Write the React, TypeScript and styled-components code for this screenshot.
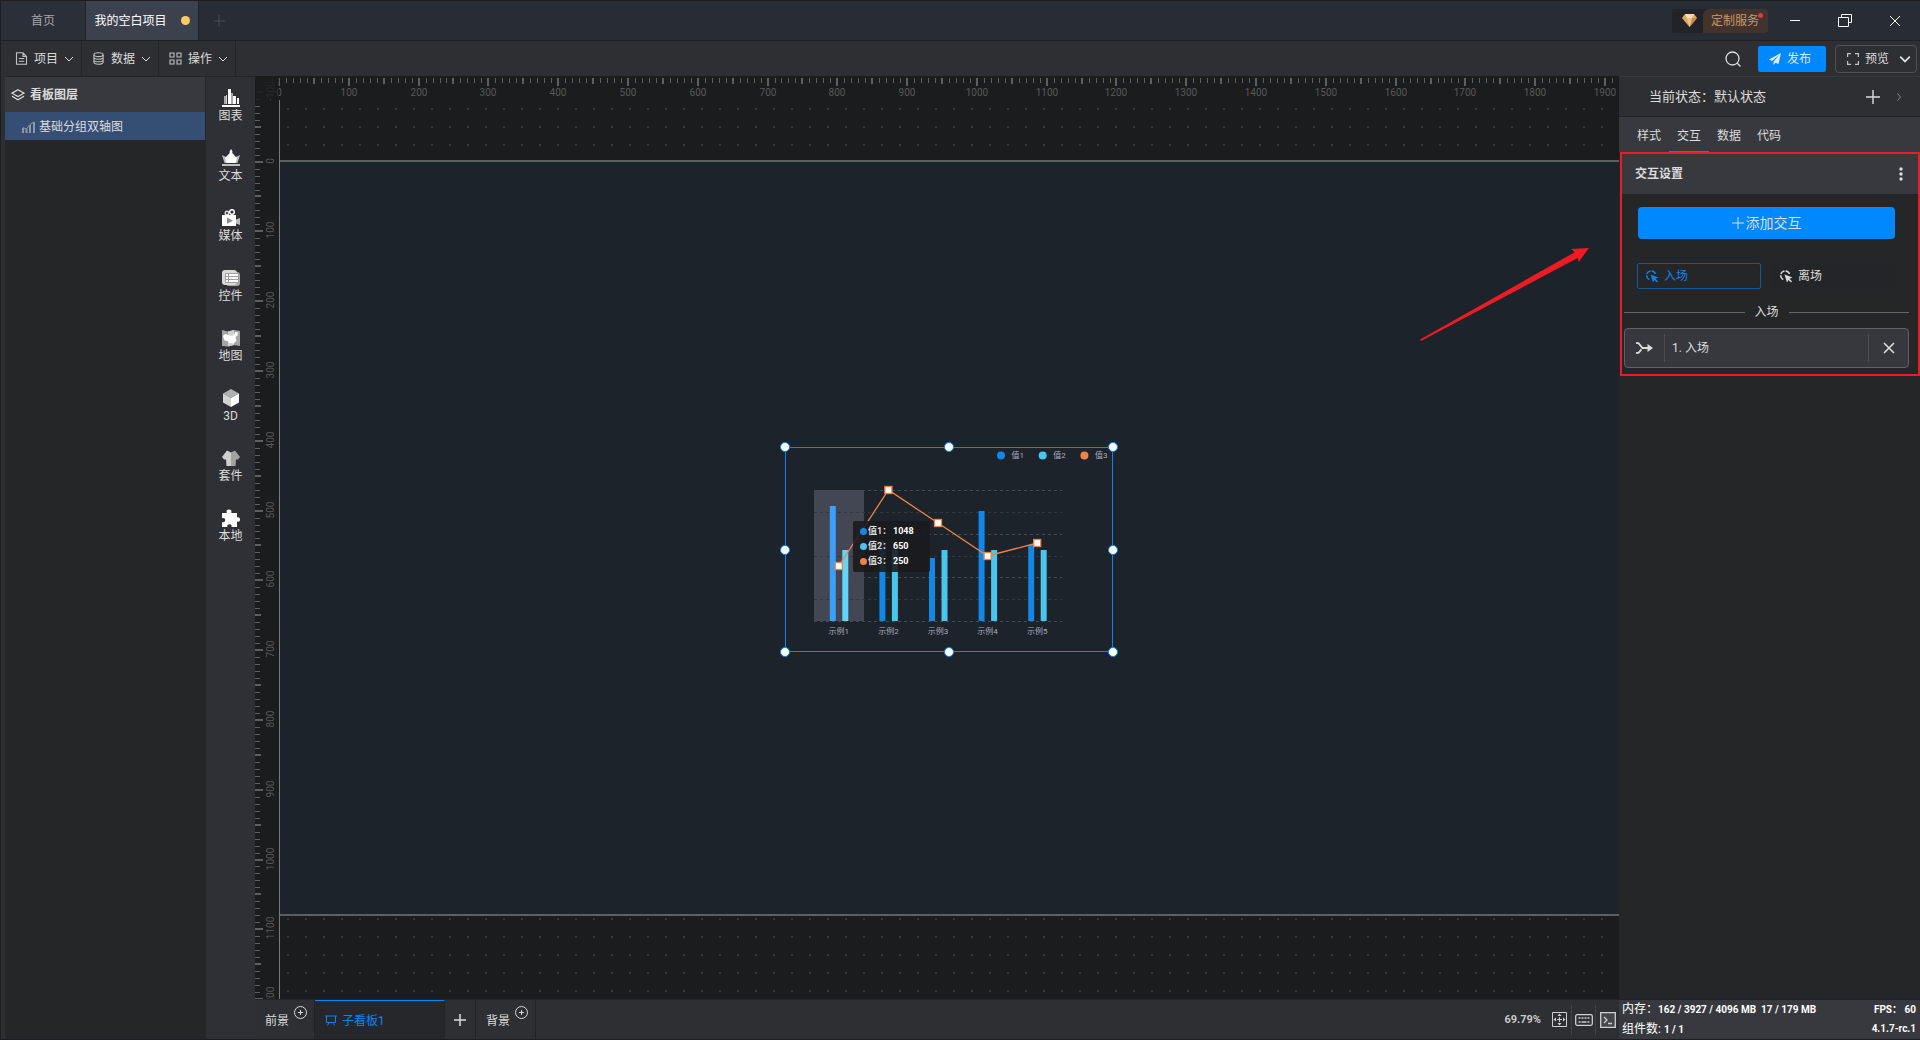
import React, { useLayoutEffect, useRef, useState } from "react";
import styled, { createGlobalStyle, css } from "styled-components";

const GlobalStyle = createGlobalStyle`
  *, *::before, *::after { box-sizing: border-box; }
  body { margin: 0; background: #252627; }
  body, button {
    font-family: Roboto, "Noto Sans CJK SC", sans-serif;
    font-size: 12px;
    line-height: 18px;
    color: #dcdcdc;
  }
  button { margin: 0; padding: 0; border: 0; background: none; cursor: pointer; }
  svg { display: block; flex: none; }
`;

/* ---------- frame ---------- */

const Frame = styled.div`
  display: flex;
  flex-direction: column;
  min-height: 100vh;
  border: solid #1e1d21;
  border-width: 1px 0 1px 1px;
  background: #2d2e32;
`;

const TitleBar = styled.header`
  display: flex;
  height: 40px;
  background: #282c35;
  border-bottom: 1px solid #1f2023;
`;

const ProjectTab = styled.button<{ $active?: boolean }>`
  display: flex;
  align-items: center;
  justify-content: center;
  gap: 14px;
  width: ${(p) => (p.$active ? 113 : 85)}px;
  border-right: 1px solid #212328;
  background: ${(p) => (p.$active ? "#3c414e" : "#2b2f37")};
  color: ${(p) => (p.$active ? "#ffffff" : "#a4a6aa")};
`;

const UnsavedDot = styled.span`
  width: 9px;
  height: 9px;
  border-radius: 50%;
  background: #ffcb66;
`;

const NewTab = styled.button`
  display: flex;
  align-items: center;
  justify-content: center;
  width: 40px;
  color: #484b52;
`;

const Spacer = styled.div`
  flex: 1;
`;

const ServiceBadge = styled.button`
  position: relative;
  display: flex;
  align-self: center;
  height: 24px;
  margin-right: 2px;
  border-radius: 3px;
  background: #222329;
  color: #cb9468;
`;

const BadgeGem = styled.span`
  display: flex;
  align-items: center;
  justify-content: center;
  width: 31px;
  padding-left: 4px;
`;

const BadgeText = styled.span`
  padding: 3px 9px 3px 8px;
  border-radius: 6px 3px 3px 0;
  background: #42342d;
`;

const BadgeDot = styled.i`
  position: absolute;
  top: 4px;
  right: 5px;
  width: 5px;
  height: 5px;
  border-radius: 50%;
  background: #e03a3e;
`;

const WindowButton = styled.button`
  display: flex;
  align-items: center;
  justify-content: center;
  width: 50px;
  color: #ffffff;
`;

/* ---------- menu bar ---------- */

const MenuBar = styled.div`
  display: flex;
  align-items: center;
  height: 35px;
  padding: 0 3px 0 4px;
  background: #2e2f33;
`;

const MenuButton = styled.button`
  display: grid;
  grid-template-columns: 13px 24px 10px;
  gap: 6px;
  align-items: center;
  align-self: stretch;
  width: 77px;
  padding-left: 10px;
  border-right: 1px solid #242528;
  color: #dcdcdc;
`;

const IconButton = styled.button`
  display: flex;
  align-items: center;
  justify-content: center;
  width: 20px;
  height: 20px;
  color: #dcdcdc;
`;

const PublishButton = styled.button`
  display: flex;
  align-items: center;
  justify-content: center;
  gap: 6px;
  width: 68px;
  height: 26px;
  margin: 0 9px 0 15px;
  padding-right: 4px;
  border-radius: 2px;
  background: #0088ff;
  color: #dcecff;
`;

const PreviewButton = styled.button`
  display: flex;
  align-items: center;
  gap: 6px;
  height: 28px;
  padding: 0 5px 0 11px;
  border: 1px solid #505156;
  border-radius: 4px;

  svg:last-child { margin-left: 4px; }
`;

/* ---------- body ---------- */

const Body = styled.div`
  display: flex;
  flex: 1;
  padding-left: 4px;
`;

const LayersPanel = styled.aside`
  width: 200px;
  background: #252627;
`;

const LayersTitle = styled.h2`
  display: flex;
  align-items: center;
  gap: 5px;
  height: 36px;
  margin: 0;
  padding-left: 6px;
  border-top: 1px solid #242528;
  background: #38393e;
  font-size: 12px;
  font-weight: 700;
`;

const LayerRow = styled.button`
  display: flex;
  align-items: center;
  gap: 4px;
  width: 100%;
  height: 28px;
  padding: 2px 0 0 17px;
  background: #354e74;
`;

const ToolRail = styled.nav`
  display: flex;
  flex-direction: column;
  width: 50px;
  border: solid #242528;
  border-width: 1px 0 0 1px;
  background: #2f3035;
`;

const ToolButton = styled.button`
  display: flex;
  flex-direction: column;
  align-items: center;
  height: 60px;
  padding-top: 12px;
`;

const Workspace = styled.main`
  display: flex;
  flex: 1;
  flex-direction: column;
  min-width: 0;
`;

/* ---------- stage ---------- */

const Stage = styled.div`
  position: relative;
  display: grid;
  flex: 1;
  grid-template: 24px 1fr / 24px 1fr;
  overflow: hidden;
  background: #1b1c1d;
`;

const HorizontalRuler = styled.div`
  grid-area: 1 / 1 / 2 / 3;
  overflow: hidden;
`;

const VerticalRuler = styled.div`
  grid-area: 1 / 1 / 3 / 2;
  position: relative;
  overflow: hidden;

  svg { position: absolute; }
`;

const RulerCorner = styled.div`
  grid-area: 1 / 1 / 2 / 2;
  z-index: 1;
  background: linear-gradient(135deg, #1b1c1d 30%, rgba(27, 28, 29, 0.5));
`;

const RulerText = styled.text`
  font-family: Roboto, sans-serif;
  font-size: 10px;
  fill: #58595b;
  text-anchor: middle;
`;

const Canvas = styled.div`
  grid-area: 2 / 2 / 3 / 3;
  position: relative;
  overflow: hidden;
  border-left: 1px solid #77797b;
  background-color: #1b1c1d;
  background-image:
    linear-gradient(#1b1c1d 16px, transparent 0),
    linear-gradient(90deg, #1b1c1d 16px, #37383a 0);
  background-size: 18px 18px;
  background-position: -9px -8px;
`;

const Artboard = styled.div`
  position: absolute;
  top: 60px;
  left: 0;
  width: 100%;
  height: 756px;
  border: solid #5c5e60;
  border-width: 2px 0;
  background: #1c232b;
`;

const Widget = styled.div`
  position: absolute;
  top: 285px;
  left: 505px;
  width: 328px;
  height: 205px;
  padding: 1px;
  box-shadow: inset 0 0 0 1px #0b84f3;
`;

const Handle = styled.i<{ $x: number; $y: number }>`
  position: absolute;
  top: ${(p) => p.$y}%;
  left: ${(p) => p.$x}%;
  width: 10px;
  height: 10px;
  margin: -5px;
  border: 1px solid #0b84f3;
  border-radius: 50%;
  background: #ffffff;
`;

const ChartText = styled.text`
  font-size: 8px;
  fill: #a9abbb;
`;

const Tooltip = styled.dl`
  position: absolute;
  top: 74px;
  left: 68px;
  width: 77px;
  margin: 0;
  padding: 3px 7px;
  border-radius: 2px;
  background: rgba(26, 26, 28, 0.88);
  font-size: 9px;
  font-weight: 700;
  line-height: 15px;
`;

const TooltipRow = styled.div`
  display: grid;
  grid-template-columns: 7px 24px auto;
  gap: 1px;
  align-items: center;
  height: 15px;
  white-space: nowrap;

  dd { margin: 0; color: #ffffff; }
`;

const Swatch = styled.i<{ $color: string }>`
  width: 7px;
  height: 7px;
  border-radius: 50%;
  background: ${(p) => p.$color};
`;

const ArrowMark = styled.svg`
  position: absolute;
  top: 172px;
  right: 30px;
`;

/* ---------- board tabs ---------- */

const BoardBar = styled.footer`
  display: flex;
  height: 40px;
  border-top: 1px solid #242528;
  background: #2e2f33;
`;

const BoardTab = styled.button<{ $active?: boolean }>`
  display: flex;
  align-items: center;
  gap: 5px;
  padding: 1px 7px 0 10px;
  border-right: 1px solid #222327;
  border-top: 1px solid transparent;
  ${(p) =>
    p.$active &&
    css`
      width: 130px;
      border-top-color: #0088ff;
      background: #26272b;
      color: #0b84f3;
    `}
`;

const RaisedIcon = styled.span`
  align-self: flex-start;
  padding-top: 4px;
`;

const AddBoard = styled.button`
  display: flex;
  align-items: center;
  justify-content: center;
  width: 31px;
  border-right: 1px solid #222327;
`;

const ZoomLevel = styled.span`
  align-self: center;
  padding-right: 6px;
  font-family: Roboto, sans-serif;
  font-size: 11px;
  font-weight: 700;
  color: #c8c8c8;
`;

const BoardTool = styled.button`
  display: flex;
  align-items: center;
  justify-content: center;
  align-self: center;
  width: 24px;
  height: 30px;
  color: #cfcfcf;

  & + & { border-left: 1px solid #424348; }
`;

/* ---------- inspector ---------- */

const Inspector = styled.aside`
  display: flex;
  flex-direction: column;
  width: 301px;
  background: #252627;
`;

const StateRow = styled.div`
  display: flex;
  align-items: center;
  gap: 12px;
  height: 41px;
  padding: 0 17px 0 30px;
  border-top: 1px solid #38393c;
  border-bottom: 1px solid #232427;
  background: #2e2f33;
  font-size: 13px;
`;

const InspectorTabs = styled.div`
  display: flex;
  height: 35px;
  padding-left: 10px;
  background: #38393e;
`;

const InspectorTab = styled.button<{ $active?: boolean }>`
  width: 40px;
  padding-top: 4px;
  border-bottom: 1px solid ${(p) => (p.$active ? "#0b84f3" : "transparent")};
`;

const Section = styled.section`
  margin-left: 1px;
  padding-bottom: 6px;
  border: 2px solid #ed1c24;
`;

const SectionHeader = styled.div`
  display: flex;
  align-items: center;
  justify-content: space-between;
  height: 40px;
  padding: 0 12px 0 13px;
  background: #38393e;
`;

const SectionTitle = styled.h3`
  margin: 0;
  font-size: 12px;
  font-weight: 700;
`;

const AddAction = styled.button`
  display: flex;
  align-items: center;
  justify-content: center;
  gap: 2px;
  width: calc(100% - 39px);
  height: 32px;
  margin: 13px 23px 0 16px;
  border-radius: 4px;
  background: #0088ff;
  font-size: 14px;
`;

const PhaseTabs = styled.div`
  display: grid;
  grid-template-columns: 1fr 1fr;
  gap: 10px;
  margin: 24px 23px 0 15px;
`;

const PhaseTab = styled.button<{ $active?: boolean }>`
  display: flex;
  align-items: center;
  gap: 5px;
  height: 26px;
  padding-left: 8px;
  border: 1px solid ${(p) => (p.$active ? "#155a9c" : "transparent")};
  border-radius: 2px;
  background: ${(p) => (p.$active ? "transparent" : "#242528")};
  color: ${(p) => (p.$active ? "#0b84f3" : "#dcdcdc")};
`;

const PhaseDivider = styled.div`
  display: flex;
  align-items: center;
  gap: 10px;
  margin: 14px 9px 7px 2px;

  &::before, &::after {
    content: "";
    flex: 1;
    height: 1px;
    background: #66676a;
  }
`;

const ActionCard = styled.div`
  display: grid;
  grid-template-columns: 39px 1fr 39px;
  height: 40px;
  margin: 0 9px 0 2px;
  padding: 5px 0;
  border: 1px solid #5f6166;
  border-radius: 4px;
  background: #37383d;
`;

const CardCell = styled.span`
  display: flex;
  align-items: center;
  justify-content: center;
`;

const CardLabel = styled.span`
  display: flex;
  align-items: center;
  padding-left: 7px;
  border: solid #4b4c52;
  border-width: 0 1px;
`;

const StatusBox = styled.div`
  display: grid;
  grid-template-columns: auto auto;
  justify-content: space-between;
  align-items: center;
  height: 40px;
  margin-top: auto;
  padding: 0 4px 0 3px;
  border-top: 1px solid #222327;
  background: #38393e;
  color: #ffffff;
  font-size: 10px;
  font-weight: 700;
  white-space: pre;
`;

const StatusLabel = styled.span`
  font-size: 12px;
  font-weight: 400;
`;

const RightText = styled.span`
  text-align: right;
`;

/* ---------- icons ---------- */

const Chevron = ({ size = 10, width = 1.2 }: { size?: number; width?: number }) => (
  <svg width={size} height={size} viewBox="0 0 10 10" fill="none" stroke="currentColor" strokeWidth={width}>
    <path d="M1 3l4 4 4-4" />
  </svg>
);

const Cross = ({ size = 12, width = 1.2 }: { size?: number; width?: number }) => (
  <svg width={size} height={size} viewBox="0 0 12 12" stroke="currentColor" strokeWidth={width}>
    <path d="M1 1l10 10M11 1L1 11" />
  </svg>
);

const PlusMark = ({ size = 12, width = 1 }: { size?: number; width?: number }) => (
  <svg width={size} height={size} viewBox="0 0 12 12" stroke="currentColor" strokeWidth={width}>
    <path d="M6 0v12M0 6h12" />
  </svg>
);

const CirclePlus = () => (
  <svg width="13" height="13" viewBox="0 0 13 13" fill="none" stroke="#d8d8d8">
    <circle cx="6.5" cy="6.5" r="6" />
    <path d="M6.5 4v5M4 6.5h5" />
  </svg>
);

const menuIcons = {
  doc: (
    <svg width="13" height="13" viewBox="0 0 13 13" fill="none" stroke="#c2c2c2" strokeWidth="1.1">
      <path d="M1.5 .8h6.5l3.5 3.6v7.8h-10zM8 .8v3.6h3.5M3.8 6.5h5.4M3.8 9.3h5.4" />
    </svg>
  ),
  data: (
    <svg width="13" height="13" viewBox="0 0 13 13" fill="none" stroke="#c2c2c2" strokeWidth="1.1">
      <ellipse cx="6.5" cy="2.7" rx="4.6" ry="1.9" />
      <path d="M1.9 2.7v7.6c0 1 2 1.9 4.6 1.9s4.6-.9 4.6-1.9V2.7M1.9 5.3c0 1 2 1.9 4.6 1.9s4.6-.9 4.6-1.9M1.9 7.9c0 1 2 1.9 4.6 1.9s4.6-.9 4.6-1.9" />
    </svg>
  ),
  grid: (
    <svg width="13" height="13" viewBox="0 0 13 13" fill="none" stroke="#c2c2c2" strokeWidth="1.1">
      <path d="M1 1h4v4H1zM8 1h4v4H8zM1 8h4v4H1zM8 8h4v4H8z" />
    </svg>
  ),
};

const toolSvg = (children: React.ReactNode) => (
  <svg width="18" height="18" viewBox="0 0 18 18">
    {children}
  </svg>
);

const tools: { label: string; icon: React.ReactNode }[] = [
  {
    label: "图表",
    icon: toolSvg(
      <>
        <path fill="#a8a8a8" d="M2 7h3v8H2zM9 4h2v11H9z" />
        <path fill="#fff" d="M6 0h3v15H6zM11 7h3v8h-3zM15 9h2v6h-2zM0 16h18v2H0z" />
        <path fill="#d0d0d0" d="M4 6h1v9H4z" />
      </>,
    ),
  },
  {
    label: "文本",
    icon: toolSvg(
      <>
        <path fill="#bdbdbd" d="M0 6l4 2 2 6H2.500zM18 6l-4 2-2 6h3.500zM0 15h18v2H0z" />
        <path fill="#fff" d="M9 0l1.500 2.500L10.200 4l3.800 4 1 1-1.500 5h-9L3 9l1-1 3.800-4-.3-1.500z" />
      </>,
    ),
  },
  {
    label: "媒体",
    icon: toolSvg(
      <>
        <circle cx="5" cy="4" r="1.800" fill="none" stroke="#ddd" strokeWidth="1.400" />
        <circle cx="10" cy="3" r="2.300" fill="none" stroke="#fff" strokeWidth="1.500" />
        <path fill="#fff" d="M0 6h14v11H0z" />
        <path fill="#bdbdbd" d="M14 10.500L18 9v7l-4-1.500z" />
        <path fill="#8c8c8c" d="M5 8.500l6 3.200-6 3.100z" />
      </>,
    ),
  },
  {
    label: "控件",
    icon: toolSvg(
      <>
        <rect x="4" y="3" width="14" height="14" rx="3" fill="#a8a8a8" />
        <rect x="0" y="1" width="15" height="15" rx="3" fill="#d9d9d9" />
        <rect x="3" y="4" width="14" height="10" rx="1" fill="#a0a0a0" />
        <path fill="#fff" d="M4 5h2v2H4zM7 5h9v2H7zM4 8h2v2H4zM7 8h9v2H7zM4 11h2v2H4zM7 11h9v2H7z" />
      </>,
    ),
  },
  {
    label: "地图",
    icon: toolSvg(
      <>
        <path fill="#a5a5a5" d="M0 1l6 1.500L12 1l6 1v15l-6-1-6 1.500L0 17z" />
        <path fill="#d0d0d0" d="M6 2.500L12 1v15l-6 1.500z" />
        <path fill="#fff" d="M1 7l2-2 3 1 4 1 2-1.500L13.500 3l2.500.5-.5 3-2 1.500 1 4-3 2.500-2-.5-2 .5-2-2.500-3-.5z" />
      </>,
    ),
  },
  {
    label: "3D",
    icon: toolSvg(
      <>
        <path fill="#b0b0b0" d="M9 0l8 4.500L9 9 1 4.500z" />
        <path fill="#d4d4d4" d="M1 4.500L9 9v9l-8-4.500z" />
        <path fill="#fff" d="M17 4.500L9 9v9l8-4.500z" />
      </>,
    ),
  },
  {
    label: "套件",
    icon: toolSvg(
      <>
        <path fill="#cfcfcf" d="M5 1.500L9 3.500V17H4.500L4 10.500H2L0 8z" />
        <path fill="#a2a2a2" d="M13 1.500L9 3.500V17h4.500l.5-6.500h2L18 8z" />
      </>,
    ),
  },
  {
    label: "本地",
    icon: toolSvg(
      <path
        fill="#fff"
        d="M0 4h4.800C4 1.500 5 .5 7 .5S10 1.500 9.300 4H15v4.500c2-.8 3 .2 3 2s-1 2.800-3 2V18H9.500c.6-2-.3-2.800-2-2.800S4.800 16 5.500 18H0v-5c2.200.7 3.200-.2 3.200-1.900S2.200 8.500 0 9.200z"
      />,
    ),
  },
];

const PhaseIcon = () => (
  <svg width="13" height="13" viewBox="0 0 13 13">
    <path d="M3.300 9.500A4.500 4.500 0 1 1 9.500 4" fill="none" stroke="currentColor" strokeWidth="1.400" strokeDasharray="5 1" />
    <path fill="currentColor" d="M4.500 4.500l8 3-3 1.300 2.500 2.700-1 1-2.600-2.600L7 12.500z" />
  </svg>
);

/* ---------- rulers ---------- */

const SCALE = 0.6979;

function useLength(axis: "width" | "height") {
  const ref = useRef<HTMLDivElement>(null);
  const [length, setLength] = useState(0);
  useLayoutEffect(() => {
    const node = ref.current;
    if (!node) return;
    const measure = () => setLength(Math.round(node.getBoundingClientRect()[axis]));
    measure();
    const observer = new ResizeObserver(measure);
    observer.observe(node);
    return () => observer.disconnect();
  }, [axis]);
  return [ref, length] as const;
}

function marks(origin: number, length: number) {
  const list: { unit: number; at: number }[] = [];
  for (let i = Math.max(-10, Math.ceil(-origin / (SCALE * 10))); i * 10 * SCALE + origin < length + 8; i++) {
    list.push({ unit: i * 10, at: Math.round(origin + i * 10 * SCALE) });
  }
  return list;
}

const tickSize = (unit: number) => (unit % 100 === 0 ? 8 : unit % 50 === 0 ? 6 : 5);

function TopRuler() {
  const [ref, length] = useLength("width");
  return (
    <HorizontalRuler ref={ref}>
      <svg width={length} height="24">
        {marks(24, length).map(({ unit, at }) => (
          <g key={unit}>
            <rect x={unit % 50 ? at : at - 1} y="2" width={unit % 50 ? 1 : 2} height={tickSize(unit)} fill="#5e5f61" />
            {unit % 100 === 0 && unit >= 0 && (
              <RulerText x={at} y="20">{unit}</RulerText>
            )}
          </g>
        ))}
      </svg>
    </HorizontalRuler>
  );
}

function SideRuler() {
  const [ref, length] = useLength("height");
  return (
    <VerticalRuler ref={ref}>
      <svg width="24" height={length}>
        {marks(85.600, length).map(({ unit, at }) => (
          <g key={unit}>
            <rect x="0" y={unit % 50 ? at : at - 1} width={tickSize(unit)} height={unit % 50 ? 1 : 2} fill="#5e5f61" />
            {unit % 100 === 0 && (
              <RulerText transform={`translate(19 ${at - 1}) rotate(-90)`}>{unit}</RulerText>
            )}
          </g>
        ))}
      </svg>
    </VerticalRuler>
  );
}

/* ---------- chart ---------- */

const BLUE = "#1287e6";
const CYAN = "#4ac6ee";
const ORANGE = "#ee8348";

const series = [
  { name: "值1", value: 1048, color: BLUE },
  { name: "值2", value: 650, color: CYAN },
  { name: "值3", value: 250, color: ORANGE },
];

const categories = [
  { name: "示例1", a: 115, b: 71, line: 55 },
  { name: "示例2", a: 80, b: 71, line: 131 },
  { name: "示例3", a: 63, b: 71, line: 98 },
  { name: "示例4", a: 110, b: 71, line: 65 },
  { name: "示例5", a: 76, b: 71, line: 78 },
];

const BASE = 173;
const LEFT = 28;
const STEP = 49.6;

function Chart() {
  const middle = (i: number) => LEFT + STEP * (i + 0.5);
  return (
    <svg width="326" height="203" viewBox="0 0 326 203">
      <rect x={LEFT} y="42" width="50" height="131" fill="#434753" />
      {[0, 1, 2, 3, 4, 5, 6].map((n) => (
        <path
          key={n}
          d={`M${LEFT} ${Math.round(42 + n * 21.85) + 0.5}h248`}
          stroke={n % 2 ? "#33363f" : "#464a53"}
          strokeDasharray="3 3"
        />
      ))}
      {categories.map((c, i) => (
        <g key={c.name}>
          <rect x={middle(i) - 9} y={BASE - c.a} width="6" height={c.a} fill={i ? BLUE : "#3ba1f8"} />
          <rect x={middle(i) + 3.500} y={BASE - c.b} width="6" height={c.b} fill={i ? CYAN : "#63d5fb"} />
          <ChartText x={middle(i)} y="186" textAnchor="middle">{c.name}</ChartText>
        </g>
      ))}
      <polyline
        points={categories.map((c, i) => `${middle(i)},${BASE - c.line}`).join(" ")}
        fill="none"
        stroke={ORANGE}
        strokeWidth="1.300"
      />
      {categories.map((c, i) => (
        <rect key={c.name} x={middle(i) - 3.500} y={BASE - c.line - 3.500} width="7" height="7" fill="#fff" stroke={ORANGE} strokeWidth="1.300" />
      ))}
      {series.map((s, i) => (
        <g key={s.name}>
          <circle cx={215 + i * 41.700} cy="7.500" r="4" fill={s.color} />
          <ChartText x={225.500 + i * 41.700} y="10">{s.name}</ChartText>
        </g>
      ))}
    </svg>
  );
}

const handles = [
  [0, 0], [50, 0], [100, 0], [0, 50], [100, 50], [0, 100], [50, 100], [100, 100],
];

export default function App() {
  return (
    <>
      <GlobalStyle />
      <Frame>
        <TitleBar>
          <ProjectTab>首页</ProjectTab>
          <ProjectTab $active>
            我的空白项目
            <UnsavedDot />
          </ProjectTab>
          <NewTab aria-label="新建">
            <PlusMark />
          </NewTab>
          <Spacer />
          <ServiceBadge>
            <BadgeGem>
              <svg width="15" height="13" viewBox="0 0 15 13">
                <path fill="#e0a768" d="M3 0h9l3 4-7.500 9L0 4z" />
                <path fill="#f7dcae" d="M3 0l2 4h5l2-4z" />
                <path fill="#c98a50" d="M10 4h5l-7.500 9z" />
                <path fill="#edc48b" d="M5 4h5L7.500 13z" />
              </svg>
            </BadgeGem>
            <BadgeText>定制服务</BadgeText>
            <BadgeDot />
          </ServiceBadge>
          <WindowButton aria-label="最小化">
            <svg width="10" height="10" stroke="currentColor"><path d="M0 4.500h10" /></svg>
          </WindowButton>
          <WindowButton aria-label="还原">
            <svg width="14" height="13" viewBox="0 0 14 13" fill="none" stroke="currentColor">
              <path d="M.5 3.500h10v9H.5zM3.500 3.500v-3h10v8h-3" />
            </svg>
          </WindowButton>
          <WindowButton aria-label="关闭">
            <Cross width={1} />
          </WindowButton>
        </TitleBar>

        <MenuBar>
          <MenuButton>{menuIcons.doc}项目<Chevron width={1} /></MenuButton>
          <MenuButton>{menuIcons.data}数据<Chevron width={1} /></MenuButton>
          <MenuButton>{menuIcons.grid}操作<Chevron width={1} /></MenuButton>
          <Spacer />
          <IconButton aria-label="搜索">
            <svg width="16" height="16" viewBox="0 0 16 16" fill="none" stroke="currentColor" strokeWidth="1.300">
              <circle cx="7.500" cy="7.500" r="6.500" />
              <path d="M12 12l3.500 3.500" />
            </svg>
          </IconButton>
          <PublishButton>
            <svg width="12" height="12" viewBox="0 0 12 12" fill="#dcecff">
              <path d="M12 0L0 6.500l3 1.500L10 2 4.500 8.700V12l2-2.200 3 1.200z" />
            </svg>
            发布
          </PublishButton>
          <PreviewButton>
            <svg width="12" height="12" viewBox="0 0 12 12" fill="none" stroke="#c2c2c2" strokeWidth="1.200">
              <path d="M.6 4V.6H4M8 .6h3.400V4M11.400 8v3.400H8M4 11.400H.6V8" />
            </svg>
            预览
            <Chevron size={12} width={1.5} />
          </PreviewButton>
        </MenuBar>

        <Body>
          <LayersPanel>
            <LayersTitle>
              <svg width="14" height="12" viewBox="0 0 14 12" fill="none" stroke="#dcdcdc" strokeWidth="1.200">
                <path d="M7 .8l6 3.400-6 3.400-6-3.400zM1 7.200l6 3.600 6-3.600" />
              </svg>
              看板图层
            </LayersTitle>
            <LayerRow>
              <svg width="13" height="12" viewBox="0 0 13 12">
                <path fill="#8b97a8" d="M0 7h2v5H0zM3.500 8h2v4h-2zM7 4h2v8H7zM11 1h2v11h-2z" />
                <path d="M1 6.500L4.500 8 8 3.500 12 1" fill="none" stroke="#8b97a8" />
              </svg>
              基础分组双轴图
            </LayerRow>
          </LayersPanel>

          <ToolRail>
            {tools.map((tool) => (
              <ToolButton key={tool.label}>
                {tool.icon}
                {tool.label}
              </ToolButton>
            ))}
          </ToolRail>

          <Workspace>
            <Stage>
              <TopRuler />
              <SideRuler />
              <RulerCorner />
              <Canvas>
                <Artboard>
                  <Widget>
                    <Chart />
                    <Tooltip>
                      {series.map((s) => (
                        <TooltipRow key={s.name}>
                          <Swatch $color={s.color} />
                          <dt>{s.name}：</dt>
                          <dd>{s.value}</dd>
                        </TooltipRow>
                      ))}
                    </Tooltip>
                    {handles.map(([x, y]) => (
                      <Handle key={`${x}-${y}`} $x={x} $y={y} />
                    ))}
                  </Widget>
                </Artboard>
              </Canvas>
              <ArrowMark width="170" height="94" viewBox="0 0 170 94">
                <path fill="#ed1c24" d="M1 91.600L155.700 4.200 152.300 1 170 0l-10.300 14-1-4L2 93z" />
              </ArrowMark>
            </Stage>

            <BoardBar>
              <BoardTab>
                前景
                <RaisedIcon><CirclePlus /></RaisedIcon>
              </BoardTab>
              <BoardTab $active>
                <svg width="12" height="11" viewBox="0 0 12 11" fill="none" stroke="currentColor">
                  <path d="M0 1h12M1.500 1v6.500h9V1M4 8l-1.500 2.500M8 8l1.500 2.500" />
                </svg>
                子看板1
              </BoardTab>
              <AddBoard aria-label="添加看板"><PlusMark width={1.5} /></AddBoard>
              <BoardTab>
                背景
                <RaisedIcon><CirclePlus /></RaisedIcon>
              </BoardTab>
              <Spacer />
              <ZoomLevel>69.79%</ZoomLevel>
              <BoardTool aria-label="适应屏幕">
                <svg width="15" height="15" viewBox="0 0 15 15" fill="none" stroke="currentColor">
                  <path d="M.5 .5h14v14H.5z" />
                  <path fill="currentColor" stroke="none" d="M7.500 1.500l2 2.500h-4zM7.500 13.500l2-2.500h-4zM1.500 7.500L4 5.500v4zM13.500 7.500L11 5.500v4zM7 5h1v5H7zM5 7h5v1H5z" />
                </svg>
              </BoardTool>
              <BoardTool aria-label="快捷键">
                <svg width="18" height="12" viewBox="0 0 18 12" fill="none" stroke="currentColor" strokeWidth="1.300">
                  <rect x=".7" y=".7" width="16.600" height="10.600" rx="1.500" />
                  <path d="M3.500 4h11" strokeDasharray="2 1" />
                  <path d="M3.500 8h2M6.500 8h5M12.500 8h2" />
                </svg>
              </BoardTool>
              <BoardTool aria-label="控制台">
                <svg width="16" height="16" viewBox="0 0 16 16" fill="none" stroke="currentColor" strokeWidth="1.300">
                  <path fill="#46474b" d="M.7 .7h14.600v14.600H.7z" />
                  <path d="M4 5l3 3-3 3M8 11.500h4" />
                </svg>
              </BoardTool>
            </BoardBar>
          </Workspace>

          <Inspector>
            <StateRow>
              当前状态：默认状态
              <Spacer />
              <IconButton aria-label="添加状态"><PlusMark size={14} width={1.2} /></IconButton>
              <svg width="8" height="10" viewBox="0 0 8 10" fill="none" stroke="#8d8e91">
                <path d="M2.500 1.500L5.500 5 2.500 8.500" />
              </svg>
            </StateRow>
            <InspectorTabs>
              <InspectorTab>样式</InspectorTab>
              <InspectorTab $active>交互</InspectorTab>
              <InspectorTab>数据</InspectorTab>
              <InspectorTab>代码</InspectorTab>
            </InspectorTabs>
            <Section>
              <SectionHeader>
                <SectionTitle>交互设置</SectionTitle>
                <svg width="10" height="14" viewBox="0 0 10 14" fill="#dcdcdc">
                  <circle cx="5" cy="2" r="1.700" />
                  <circle cx="5" cy="7" r="1.700" />
                  <circle cx="5" cy="12" r="1.700" />
                </svg>
              </SectionHeader>
              <AddAction><PlusMark />添加交互</AddAction>
              <PhaseTabs>
                <PhaseTab $active><PhaseIcon />入场</PhaseTab>
                <PhaseTab><PhaseIcon />离场</PhaseTab>
              </PhaseTabs>
              <PhaseDivider>入场</PhaseDivider>
              <ActionCard>
                <CardCell>
                  <svg width="17" height="12" viewBox="0 0 17 12" fill="none" stroke="#dcdcdc" strokeWidth="1.800">
                    <path d="M0 1.200h2.500L6.500 6H13M0 10.800h2.500l3-3.500" />
                    <path fill="#dcdcdc" stroke="none" d="M11.500 2L17 6l-5.500 4z" />
                  </svg>
                </CardCell>
                <CardLabel>1. 入场</CardLabel>
                <CardCell as="button" aria-label="删除"><Cross width={1.6} /></CardCell>
              </ActionCard>
            </Section>
            <StatusBox>
              <span><StatusLabel>内存：</StatusLabel>162 / 3927 / 4096 MB  17 / 179 MB</span>
              <RightText>FPS： 60</RightText>
              <span><StatusLabel>组件数: </StatusLabel>1 / 1</span>
              <RightText>4.1.7-rc.1</RightText>
            </StatusBox>
          </Inspector>
        </Body>
      </Frame>
    </>
  );
}
